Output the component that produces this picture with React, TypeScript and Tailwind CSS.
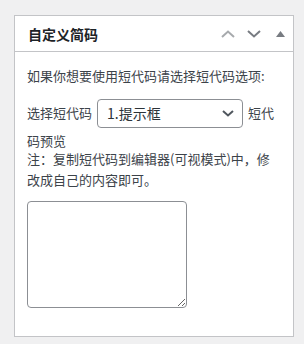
export default function App() {
    return (
        <div
            className="min-h-[344px] w-[304px] bg-[#f0f0f1] pt-[15px] pl-[14px]"
            style={{ fontFamily: '"Noto Sans CJK SC", "Noto Sans", sans-serif' }}
        >
            <div className="w-[280px] h-[322px] border border-[#c3c4c7] bg-white">
                {/* Header */}
                <div className="h-[36px] border-b border-[#c3c4c7] flex items-center pl-[13px]">
                    <h2 className="text-[14px] font-semibold text-[#1d2327] leading-none">自定义简码</h2>
                    <div className="ml-auto flex items-center">
                        <span className="w-[26px] h-[26px] flex items-center justify-center">
                            <svg width="14" height="8" viewBox="0 0 14 8" fill="none">
                                <path d="M1 7 7 1.5 13 7" stroke="#a7aaad" strokeWidth="2" />
                            </svg>
                        </span>
                        <span className="w-[26px] h-[26px] flex items-center justify-center">
                            <svg width="14" height="8" viewBox="0 0 14 8" fill="none">
                                <path d="M1 1 7 6.5 13 1" stroke="#787c82" strokeWidth="2" />
                            </svg>
                        </span>
                        <span className="w-[26px] h-[26px] flex items-center justify-center">
                            <svg width="9" height="6" viewBox="0 0 9 6">
                                <path d="M4.5 0 9 6H0z" fill="#787c82" />
                            </svg>
                        </span>
                    </div>
                </div>

                {/* Body */}
                <div className="px-[12px] pt-[14px] text-[13px] text-[#3c434a]">
                    <p className="leading-[20px]">如果你想要使用短代码请选择短代码选项:</p>
                    <div className="mt-[13px] flex items-center h-[28px]">
                        <span className="leading-[20px]">选择短代码</span>
                        <div className="ml-[5px] w-[146px] h-[29px] border border-[#8c8f94] rounded-[4px] flex items-center pl-[9px] pr-[8px]">
                            <span className="text-[14px] text-[#2c3338]">1.提示框</span>
                            <svg className="ml-auto" width="12" height="7" viewBox="0 0 12 7" fill="none">
                                <path d="M1 1 6 5.5 11 1" stroke="#50575e" strokeWidth="2" />
                            </svg>
                        </div>
                        <span className="ml-[5px] leading-[20px]">短代</span>
                    </div>
                    <p className="mt-[4px] leading-[20px]">码预览</p>
                    <p className="leading-[20px] -mt-[2px]">注：复制短代码到编辑器(可视模式)中，修</p>
                    <p className="leading-[20px] mt-[1px]">改成自己的内容即可。</p>
                    <textarea className="mt-[11px] block w-[160px] h-[107px] border border-[#8c8f94] rounded-[4px] bg-white resize" />
                </div>
            </div>
        </div>
    );
}
